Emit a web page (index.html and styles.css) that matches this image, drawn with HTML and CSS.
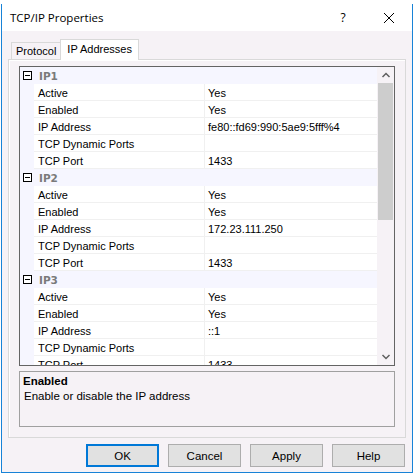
FILE: index.html
```html
<!DOCTYPE html>
<html lang="en">
<head>
    <meta charset="UTF-8">
    <title>TCP/IP Properties</title>
    <link rel="stylesheet" href="styles.css">
</head>
<body>
    <div class="behind"></div>
    <div class="window">
        <div class="titlebar">
            <span class="title">TCP/IP Properties</span>
            <span class="help-btn">?</span>
            <span class="close-btn">
                <svg width="12" height="12" viewBox="0 0 12 12"><path d="M1 1 L11 11 M11 1 L1 11" stroke="#000" stroke-width="1"/></svg>
            </span>
        </div>

        <div class="dialog">
            <div class="tabs">
                <div class="tab">Protocol</div>
                <div class="tab active">IP Addresses</div>
            </div>

            <div class="panel">
                <div class="grid">
                    <div class="rows">
                        <!-- IP1 -->
                        <div class="cat"><span class="box"></span><span class="cat-name">IP1</span></div>
                        <div class="row"><span class="name">Active</span><span class="value">Yes</span></div>
                        <div class="row"><span class="name">Enabled</span><span class="value">Yes</span></div>
                        <div class="row"><span class="name">IP Address</span><span class="value">fe80::fd69:990:5ae9:5fff%4</span></div>
                        <div class="row"><span class="name">TCP Dynamic Ports</span><span class="value"></span></div>
                        <div class="row"><span class="name">TCP Port</span><span class="value">1433</span></div>
                        <!-- IP2 -->
                        <div class="cat"><span class="box"></span><span class="cat-name">IP2</span></div>
                        <div class="row"><span class="name">Active</span><span class="value">Yes</span></div>
                        <div class="row"><span class="name">Enabled</span><span class="value">Yes</span></div>
                        <div class="row"><span class="name">IP Address</span><span class="value">172.23.111.250</span></div>
                        <div class="row"><span class="name">TCP Dynamic Ports</span><span class="value"></span></div>
                        <div class="row"><span class="name">TCP Port</span><span class="value">1433</span></div>
                        <!-- IP3 -->
                        <div class="cat"><span class="box"></span><span class="cat-name">IP3</span></div>
                        <div class="row"><span class="name">Active</span><span class="value">Yes</span></div>
                        <div class="row"><span class="name">Enabled</span><span class="value">Yes</span></div>
                        <div class="row"><span class="name">IP Address</span><span class="value">::1</span></div>
                        <div class="row"><span class="name">TCP Dynamic Ports</span><span class="value"></span></div>
                        <div class="row"><span class="name">TCP Port</span><span class="value">1433</span></div>
                    </div>
                    <div class="scrollbar">
                        <svg class="arrow" width="16" height="16" viewBox="0 0 16 16"><path d="M4.5 10 L8 6.5 L11.5 10" fill="none" stroke="#606060" stroke-width="1.5"/></svg>
                        <div class="track"><div class="thumb"></div></div>
                        <svg class="arrow" width="16" height="16" viewBox="0 0 16 16"><path d="M4.5 6 L8 9.5 L11.5 6" fill="none" stroke="#606060" stroke-width="1.5"/></svg>
                    </div>
                </div>

                <div class="desc">
                    <div class="desc-title">Enabled</div>
                    <div class="desc-text">Enable or disable the IP address</div>
                </div>
            </div>

            <div class="buttons">
                <button class="btn default">OK</button>
                <button class="btn">Cancel</button>
                <button class="btn">Apply</button>
                <button class="btn">Help</button>
            </div>
        </div>
    </div>
</body>
</html>
```

FILE: styles.css
```css
* {
    margin: 0;
    padding: 0;
    box-sizing: border-box;
}

body {
    width: 414px;
    height: 475px;
    overflow: hidden;
    background: #fff;
    font-family: "Liberation Sans", Arial, sans-serif;
    font-size: 11px;
    color: #000;
}

.behind {
    height: 4px;
    background: #fff;
}

/* Window frame */
.window {
    margin-left: 1px;
    width: 412px;
    height: 469px;
    border: 1px solid #1883d7;
    border-top: none;
    display: flex;
    flex-direction: column;
}

.titlebar {
    height: 27px;
    background: #fff;
    display: flex;
    align-items: center;
    padding-left: 8px;
    font-family: "Open Sans", "Liberation Sans", sans-serif;
    font-size: 11.5px;
}

.title {
    flex: 1;
}

.help-btn {
    width: 46px;
    text-align: center;
    font-size: 12px;
}

.close-btn {
    width: 46px;
    display: flex;
    justify-content: center;
}

.dialog {
    flex: 1;
    background: #f6f2f6;
    padding: 8px 6px 0 6px;
    display: flex;
    flex-direction: column;
}

/* Tabs */
.tabs {
    display: flex;
    align-items: flex-end;
    height: 20px;
    padding-left: 3px;
}

.tab {
    height: 17px;
    padding: 2px 4px 0 4px;
    border: 1px solid #d9d9d9;
    border-bottom: none;
    border-right: none;
    background: #f6f2f6;
    font-family: "Liberation Sans", sans-serif;
    font-size: 11px;
}

.tab.active {
    height: 21px;
    padding: 3px 6px 0 6px;
    background: #fff;
    border-right: 1px solid #d9d9d9;
    margin-bottom: -1px;
    position: relative;
    z-index: 1;
}

.panel {
    height: 379px;
    border: 1px solid #d9d9d9;
    background: #f6f2f6;
    padding: 6px 10px 0 10px;
    box-shadow: inset 1px 1px 0 #fff;
}

/* Property grid */
.grid {
    height: 300px;
    border: 1px solid #646464;
    display: flex;
    background: #fff;
}

.rows {
    flex: 1;
    overflow: hidden;
}

.cat {
    height: 17px;
    background: #f6f6ff;
    display: flex;
    align-items: center;
}

.box {
    width: 9px;
    height: 9px;
    border: 1px solid #000;
    margin-left: 3px;
    margin-right: 7px;
    position: relative;
    background: #fff;
}

.box::after {
    content: '';
    position: absolute;
    left: 1px;
    top: 3px;
    width: 5px;
    height: 1px;
    background: #000;
}

.cat-name {
    font-weight: bold;
    color: #7a7a7a;
    font-family: "DejaVu Sans", sans-serif;
    font-size: 10.5px;
}

.row {
    height: 17px;
    display: flex;
    background: #f6f6ff;
}

.row span {
    border-bottom: 1px solid #f0f0f0;
    background: #fff;
    display: flex;
    align-items: center;
    padding-top: 1px;
}

.name {
    margin-left: 14px;
    width: 171px;
    padding-left: 4px;
    border-right: 1px solid #f0f0f0;
}

.value {
    flex: 1;
    padding-left: 3px;
}

.scrollbar {
    width: 17px;
    background: #f6f2f6;
    display: flex;
    flex-direction: column;
}

.arrow {
    display: block;
    margin: 0 auto;
    flex-shrink: 0;
}

.track {
    flex: 1;
    padding: 0 1px;
}

.thumb {
    height: 137px;
    background: #cdcdcd;
}

/* Description pane */
.desc {
    margin-top: 5px;
    height: 56px;
    border: 1px solid #a0a0a0;
    padding: 3px 3px 2px 3px;
}

.desc-title {
    font-weight: bold;
    font-size: 11.5px;
    margin-bottom: 3px;
}

.desc-text {
    font-size: 11.5px;
    padding-left: 1px;
}

/* Buttons */
.buttons {
    display: flex;
    justify-content: flex-end;
    gap: 9px;
    padding-top: 6px;
    padding-right: 1px;
}

.btn {
    width: 73px;
    height: 23px;
    background: #e1e1e1;
    border: 1px solid #adadad;
    font-family: "Liberation Sans", sans-serif;
    font-size: 11.5px;
    color: #000;
}

.btn.default {
    border: 2px solid #0078d7;
}
```
